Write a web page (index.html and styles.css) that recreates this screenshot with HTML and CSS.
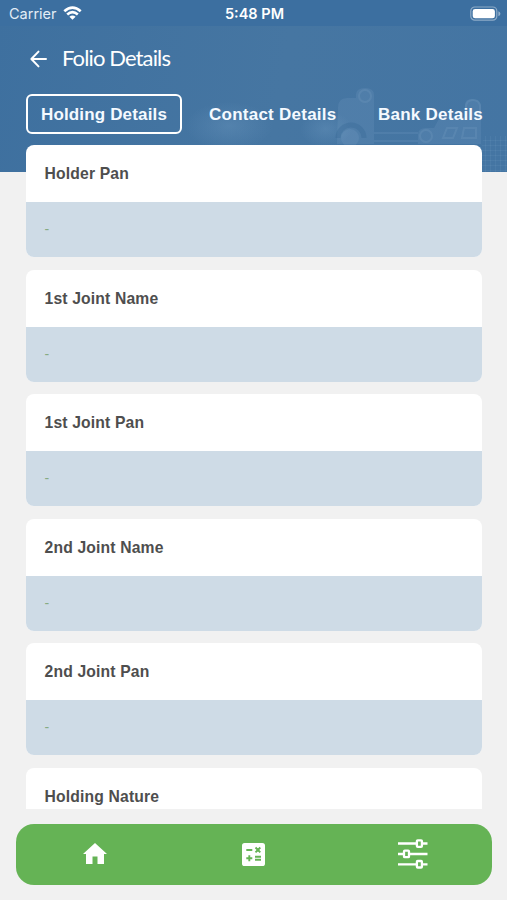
FILE: index.html
```html
<!DOCTYPE html>
<html lang="en">
<head>
<meta charset="utf-8">
<title>Folio Details</title>
<link rel="stylesheet" href="styles.css">
</head>
<body>
<div class="app">
  <svg class="scene" viewBox="0 0 507 172" aria-hidden="true">
    <defs>
      <radialGradient id="glow"><stop offset="0" stop-color="#8db6da" stop-opacity=".2"/><stop offset="1" stop-color="#8db6da" stop-opacity="0"/></radialGradient>
      <pattern id="grid" width="5" height="5" patternUnits="userSpaceOnUse"><path d="M0 0H5M0 0V5" stroke="#a3c4df" stroke-opacity=".16"/></pattern>
    </defs>
    <ellipse cx="229" cy="126" rx="44" ry="24" fill="url(#glow)"/>
    <ellipse cx="326" cy="129" rx="26" ry="18" fill="url(#glow)"/>
    <g fill="#9abddb" fill-opacity=".12">
      <path d="M338 108q0-10 9-10h9v-3q0-7 9-7t9 7v49h-37z"/>
      <circle cx="350" cy="138" r="9"/>
      <path d="M418 144v-9q0-7 8-7h8l6-11h25v-12q0-6 7-6t9 6v39z"/>
      <path d="M374 132h44v2h-44zM374 140h44v2h-44z"/>
    </g>
    <path d="M338 138a13 13 0 0 1 26 0" fill="none" stroke="#2f618f" stroke-opacity=".28" stroke-width="5"/>
    <g fill="none" stroke="#a3c4df" stroke-opacity=".12" stroke-width="2"><circle cx="365" cy="96" r="6"/><circle cx="426" cy="136" r="6"/><path d="M466 116v-9q0-7 7-7t7 7v9M447 128h10l-4 10h-10zM464 128h12v10h-14z"/></g>
    <path d="M484 136h23v36h-25v-28z" fill="url(#grid)"/>
  </svg>
  <header class="status">
    <div class="carrier"><span>Carrier</span>
      <svg width="19" height="14" viewBox="0 0 19 14"><g fill="none" stroke="#fff" stroke-width="2.7"><path d="M1.3 5.2Q9.5-2.1 17.7 5.2"/><path d="M4.2 8.5q5.3-4.7 10.6 0"/></g><path d="M6.4 10.7q3.1-2.5 6.2 0L9.5 13.8z" fill="#fff"/></svg>
    </div>
    <span class="time">5:48 PM</span>
    <div class="power"><svg width="31" height="16" viewBox="0 0 31 16"><rect x=".8" y="1" width="26" height="13.2" rx="4" fill="none" stroke="#fff" stroke-opacity=".42" stroke-width="1.2"/><rect x="2.7" y="3" width="22.2" height="9.3" rx="2.4" fill="#fff"/><path d="M28.4 5.2q2 .7 2 2.5t-2 2.5z" fill="#fff" fill-opacity=".45"/></svg></div>
  </header>
  <div class="titlebar">
    <svg width="18" height="18" viewBox="0 0 18 18"><path d="M8.500 1.600L1.400 9l7.100 7.400M1.800 9h14.200" fill="none" stroke="#fff" stroke-width="2" stroke-linecap="round" stroke-linejoin="round"/></svg>
    <h1>Folio Details</h1>
  </div>
  <nav class="tabs">
    <a class="tab active">Holding Details</a>
    <a class="tab contact">Contact Details</a>
    <a class="tab bank">Bank Details</a>
  </nav>
  <main class="list">
    <section class="card"><h2>Holder Pan</h2><p>-</p></section>
    <section class="card"><h2>1st Joint Name</h2><p>-</p></section>
    <section class="card"><h2>1st Joint Pan</h2><p>-</p></section>
    <section class="card"><h2>2nd Joint Name</h2><p>-</p></section>
    <section class="card"><h2>2nd Joint Pan</h2><p>-</p></section>
    <section class="card"><h2>Holding Nature</h2></section>
  </main>
  <footer class="bottom">
    <svg width="24" height="22" viewBox="0 0 24 22"><path d="M12 0L24 11h-3v10h-6.500v-7.400h-5V21H3V11H0z" fill="#fff"/></svg>
    <svg width="23" height="23" viewBox="0 0 23 23"><rect width="23" height="23" rx="2.600" fill="#fff"/><path d="M4.300 7h6M13.500 4.500l4.800 4.800m0-4.800l-4.800 4.800M4.300 15.300h6M7.300 12.300v6M13 13.800h6M13 16.800h6" fill="none" stroke="#65b355" stroke-width="1.900"/></svg>
    <svg width="30" height="30" viewBox="0 0 30 30"><g fill="none" stroke="#fff" stroke-width="2.300"><path d="M0 4.500h18.500m5.500 0h5.500M0 15h5.500m5.700 0h18.300M0 25.300h18.500m5.500 0h5.500"/><rect x="18.900" y="1.300" width="5" height="6.500" rx=".8"/><rect x="6" y="11.700" width="5" height="6.500" rx=".8"/><rect x="18.900" y="22" width="5" height="6.500" rx=".8"/></g></svg>
  </footer>
</div>
</body>
</html>
```
FILE: styles.css
```css
* { box-sizing: border-box; }
body { margin: 0; background: #f1f1f1; font-family: "Liberation Sans", Arial, sans-serif; }
.app {
  position: relative;
  height: 900px;
  overflow: hidden;
  display: flex;
  flex-direction: column;
  background: linear-gradient(100deg, #3e709f, #4676a2 55%, #4475a3) 0 0 / 100% 172px no-repeat, #f1f1f1;
}
.scene { position: absolute; left: 0; top: 0; width: 507px; height: 172px; }
.status, .titlebar, .tabs, .list, .bottom { position: relative; flex: none; }
.status {
  height: 26px;
  padding: 0 7px 0 9px;
  display: grid;
  grid-template-columns: 1fr auto 1fr;
  align-items: center;
  background: #3c6fa0;
  color: #fff;
  font: 14.5px/26px Inter, sans-serif;
}
.carrier { display: flex; align-items: center; gap: 6px; color: #e3edf6; }
.carrier svg { margin-top: -2px; }
.time { font-weight: 600; padding-top: 1px; }
.power { display: flex; justify-content: flex-end; margin-right: -1px; }
.titlebar { height: 68px; padding: 0 30px; display: flex; align-items: center; gap: 14px; }
.titlebar svg { margin-top: -3px; }
.titlebar h1 { margin: -5px 0 0; color: #fff; font: 400 22px/30px Lato, sans-serif; letter-spacing: -.88px; white-space: nowrap; }
.tabs { height: 51px; padding-left: 26px; display: flex; align-items: flex-start; white-space: nowrap; }
.tab { height: 40px; font-size: 17px; font-weight: 700; line-height: 41px; letter-spacing: .25px; color: #f5faff; }
.active { width: 156px; border: 2px solid #fff; border-radius: 6px; text-align: center; line-height: 37px; letter-spacing: .15px; margin-right: 27px; }
.contact { width: 169px; }
.list { height: 664px; padding: 0 25px 0 26px; overflow: hidden; display: flex; flex-direction: column; gap: 12.6px; }
.card { flex: none; height: 112px; border-radius: 8px; overflow: hidden; background: #fff; }
.card h2 { margin: 0; height: 57px; padding-left: 18.5px; font-size: 15.7px; line-height: 58px; letter-spacing: .16px; color: #4e4e4e; }
.card p { margin: 0; height: 55px; padding-left: 18.5px; background: #cedbe6; color: #87ab83; font-size: 14px; line-height: 54px; }
.bottom {
  width: 476px;
  height: 61px;
  margin: 15px 0 0 16px;
  padding-bottom: 1px;
  border-radius: 18px;
  background: #65b355;
  display: grid;
  grid-template-columns: repeat(3, 1fr);
  place-items: center;
}
```
